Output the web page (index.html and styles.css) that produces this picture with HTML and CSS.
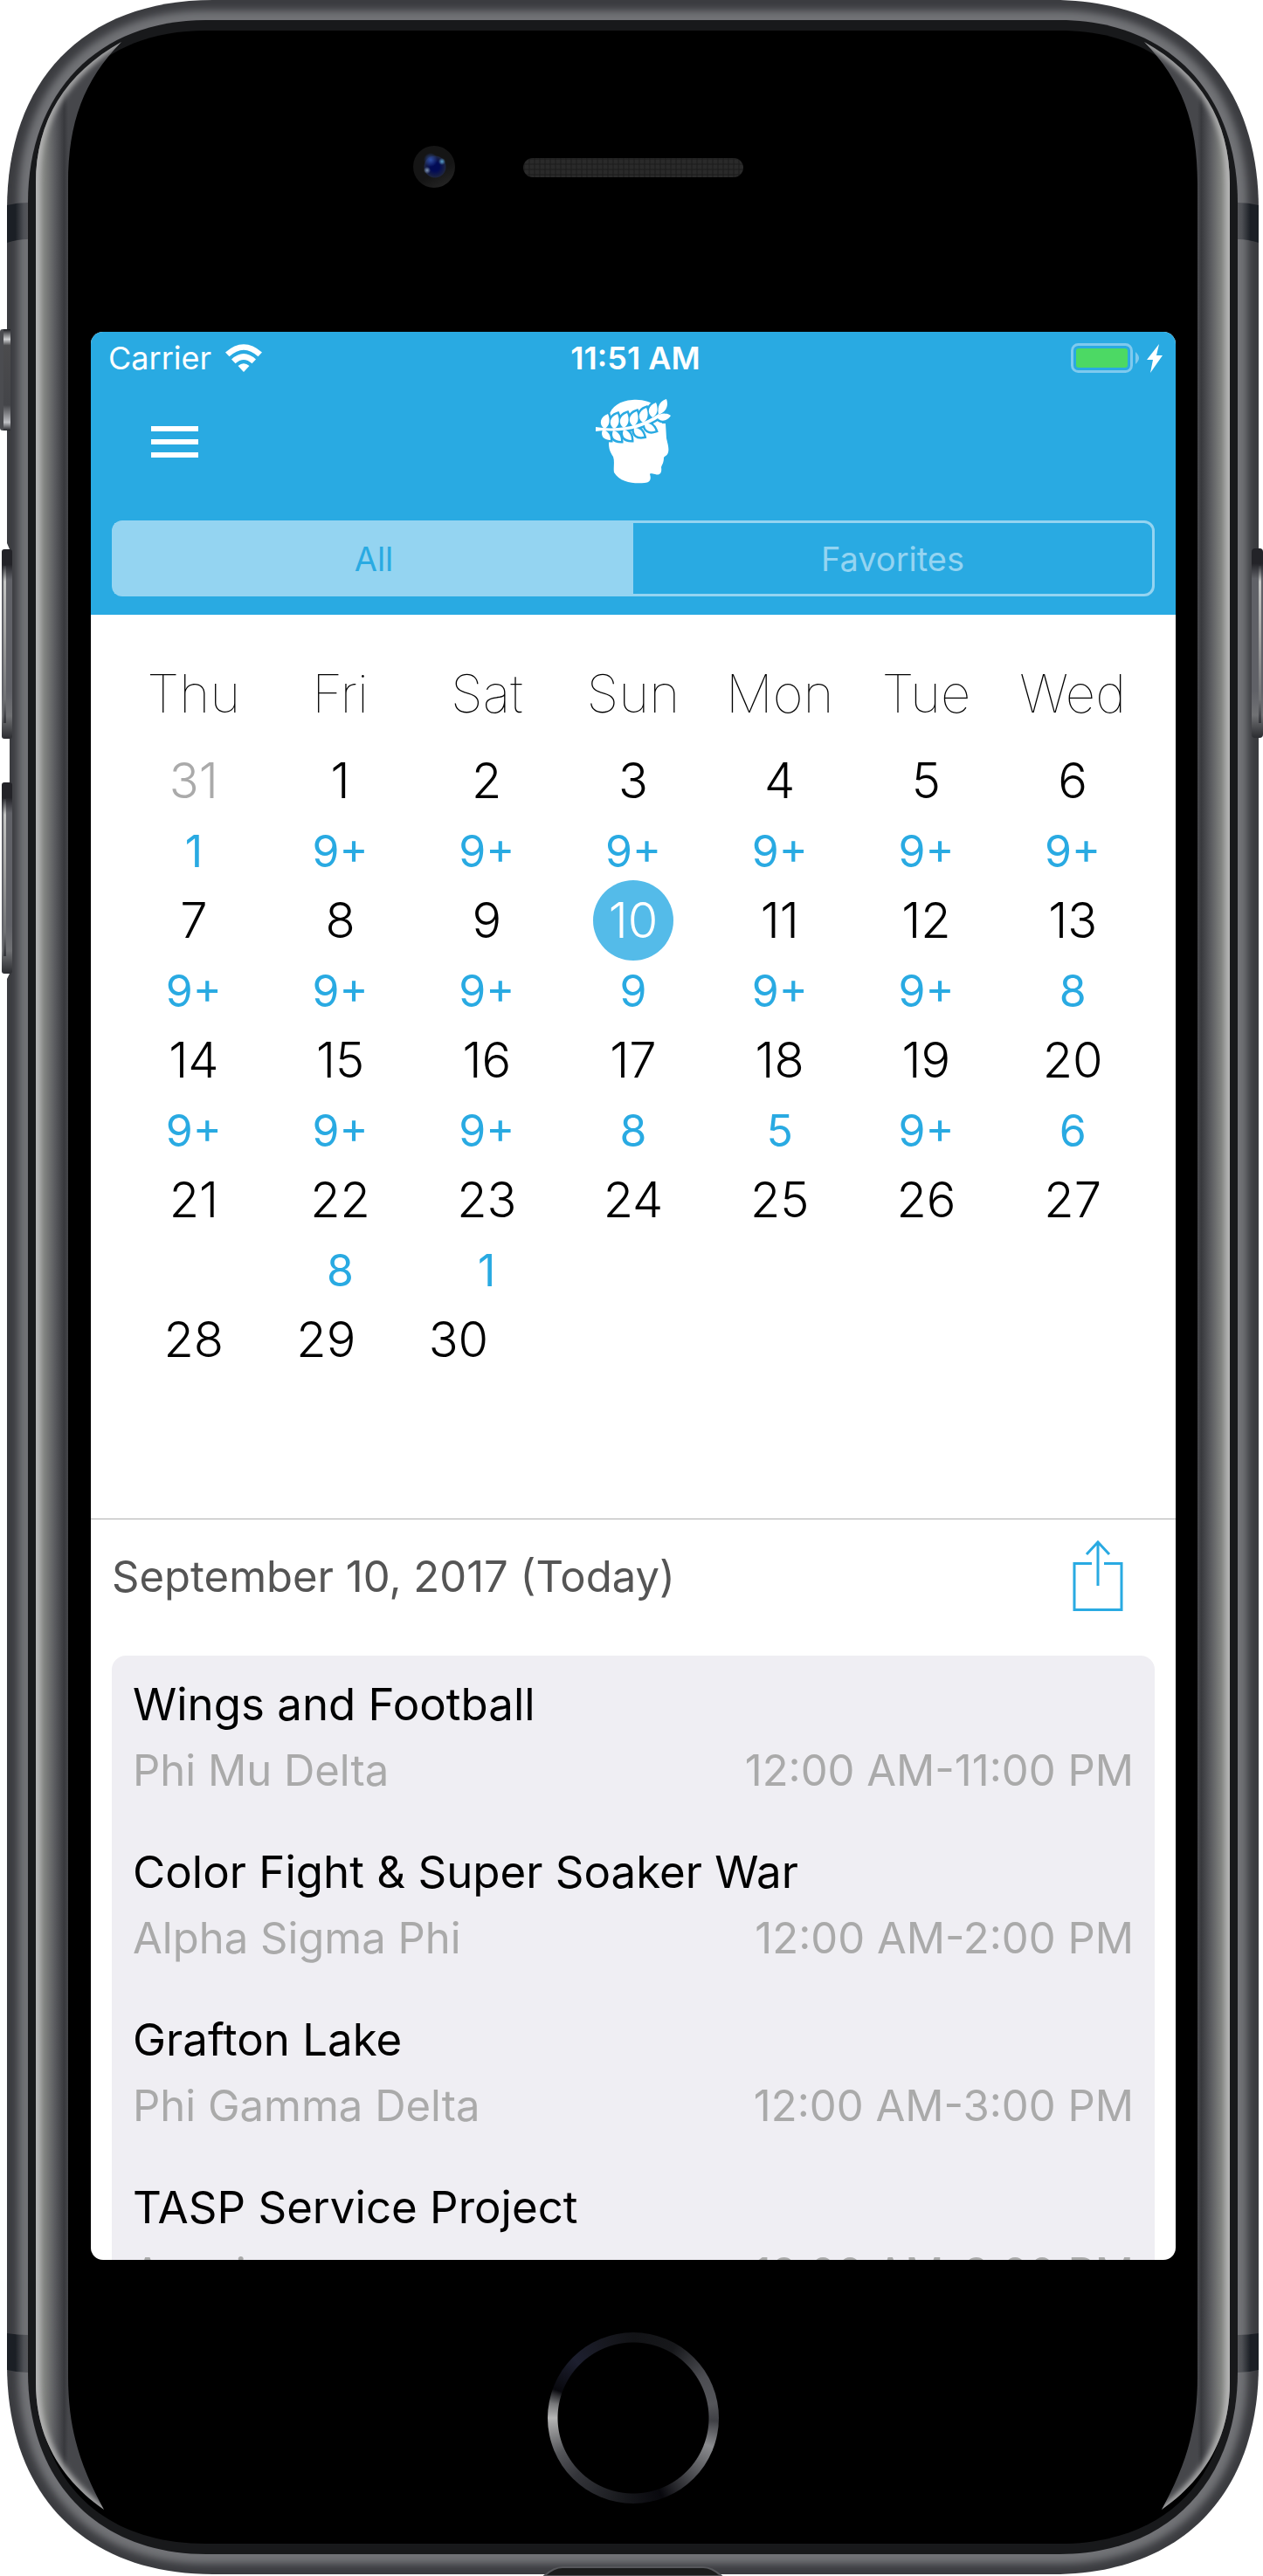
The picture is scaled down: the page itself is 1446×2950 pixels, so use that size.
FILE: index.html
```html
<!DOCTYPE html>
<html lang="en">
<head>
<meta charset="utf-8">
<meta name="viewport" content="width=device-width, initial-scale=1">
<title>Events calendar</title>
<link rel="stylesheet" href="styles.css">
</head>
<body>
<div class="device">
  <svg class="shell" viewBox="0 0 1446 2950" preserveAspectRatio="none" aria-hidden="true">
    <defs>
      <path id="body" d="M8 240C8 94 94 0 244 0H1205C1355 0 1441 94 1441 240V2708C1441 2854 1355 2948 1205 2948H244C94 2948 8 2854 8 2708Z"/>
      <path id="rim" d="M32 232C32 106 112 23 236 23H1213C1337 23 1417 106 1417 232V2716C1417 2842 1337 2925 1213 2925H236C112 2925 32 2842 32 2716Z"/>
      <path id="edge" d="M139 48C75 84 41 138 41 210V2728C41 2790 68 2838 119 2874C93 2826 78 2784 78 2722V210C78 140 96 92 139 48Z"/>
      <clipPath id="bodyClip"><use href="#body"/></clipPath>
      <clipPath id="edgeClip"><use href="#edge"/></clipPath>
      <filter id="soft" x="-5%" y="-5%" width="110%" height="110%"><feGaussianBlur stdDeviation="4"/></filter>
      <filter id="soft2" filterUnits="userSpaceOnUse" x="0" y="0" width="200" height="2950"><feGaussianBlur stdDeviation="3"/></filter>
      <linearGradient id="glass" gradientUnits="userSpaceOnUse" x1="41" x2="78" y1="0" y2="0">
        <stop offset="0" stop-color="#a9a9a9"/><stop offset=".25" stop-color="#848683"/><stop offset=".6" stop-color="#595a5e"/><stop offset=".88" stop-color="#38393d"/><stop offset="1" stop-color="#46474b"/>
      </linearGradient>
      <linearGradient id="band"><stop offset=".4" stop-color="#1b1f25"/><stop offset=".8" stop-color="#4e5055"/><stop offset="1" stop-color="#56575b"/></linearGradient>
      <linearGradient id="key" x2="0" y2="1"><stop offset=".08" stop-color="#232328"/><stop offset=".16" stop-color="#606167"/><stop offset=".75" stop-color="#606167"/><stop offset=".88" stop-color="#707174"/><stop offset="1" stop-color="#2b2c30"/></linearGradient>
      <linearGradient id="keyLight" x2="0" y2="1"><stop offset="0" stop-color="#34353a"/><stop offset=".1" stop-color="#c4c5c4"/><stop offset=".4" stop-color="#a7a7a6"/><stop offset=".85" stop-color="#707174"/><stop offset="1" stop-color="#333439"/></linearGradient>
      <linearGradient id="mute" x2="0" y2="1"><stop offset="0" stop-color="#1b1c20"/><stop offset=".1" stop-color="#d0d1d3"/><stop offset=".16" stop-color="#4b4b4d"/><stop offset=".75" stop-color="#444549"/><stop offset=".92" stop-color="#bfc0c4"/><stop offset="1" stop-color="#222327"/></linearGradient>
    </defs>
    <use href="#body" fill="#3b3c40"/>
    <g clip-path="url(#bodyClip)"><use href="#rim" fill="none" stroke="#717276" stroke-width="22" filter="url(#soft)"/></g>
    <path d="M8 235Q20 232 32 232V274Q20 274 8 278Z" fill="url(#band)"/>
    <path d="M8 2672Q20 2674 32 2674V2717Q20 2717 8 2714Z" fill="url(#band)"/>
    <g transform="matrix(-1 0 0 1 1449 0)">
      <path d="M8 235Q20 232 32 232V274Q20 274 8 278Z" fill="url(#band)"/>
      <path d="M8 2672Q20 2674 32 2674V2717Q20 2717 8 2714Z" fill="url(#band)"/>
    </g>
    <use href="#rim" fill="#18191b"/>
    <path d="M41 240C41 116 112 35 236 35H1213C1337 35 1408 116 1408 240V2716C1408 2836 1337 2913 1213 2913H236C112 2913 41 2836 41 2716Z" fill="#000"/>
    <g id="crescent">
      <use href="#edge" fill="url(#glass)"/>
      <g clip-path="url(#edgeClip)"><path d="M141 46C75 84 41 138 41 210V2728C41 2790 68 2838 121 2876" fill="none" stroke="#b8b8b8" stroke-width="7" filter="url(#soft2)"/></g>
    </g>
    <use href="#crescent" transform="matrix(-1 0 0 1 1449 0)"/>
    <path d="M8 846H11V896H8Z M8 622L11 629H8Z M8 1121L11 1115H8Z" fill="#fff"/>
    <rect x="0" y="377" width="12" height="116" rx="3" fill="#4b4c50"/>
    <rect x="4" y="377" width="8" height="116" fill="url(#mute)"/>
    <rect x="2" y="629" width="12" height="217" rx="3" fill="url(#key)"/>
    <rect x="4" y="648" width="3" height="180" fill="url(#keyLight)"/>
    <rect x="2" y="896" width="12" height="219" rx="3" fill="url(#key)"/>
    <rect x="4" y="915" width="3" height="180" fill="url(#keyLight)"/>
    <rect x="1433" y="628" width="13" height="217" rx="4" fill="url(#key)"/>
    <rect x="1441" y="648" width="3" height="180" fill="url(#keyLight)"/>
    <path d="M623 2950Q634 2940 644 2940H805Q815 2940 826 2950Z" fill="#1b1c1c" stroke="#56575b" stroke-width="2"/>
  </svg>

  <div class="bezel-top">
    <span class="camera"></span>
    <span class="speaker"></span>
  </div>

  <main class="screen">
    <header class="top">
      <div class="status">
        <div class="carrier">Carrier
          <svg width="42" height="32" viewBox="0 0 42 32" fill="#fff" aria-hidden="true">
            <path d="M21 32L14.500 25Q21 19.500 27.500 25Z"/>
            <path d="M7 17.500Q21 4.500 35 17.500L30.500 22.300Q21 13.500 11.500 22.300Z"/>
            <path d="M0 9.500Q21 -9 42 9.500L37.500 14.300Q21 -1 4.500 14.300Z"/>
          </svg>
        </div>
        <strong class="time">11:51 AM</strong>
        <div class="battery">
          <svg width="105" height="36" viewBox="0 0 105 36" aria-hidden="true">
            <rect x="1.500" y="2.500" width="68" height="31" rx="7" fill="none" stroke="#7fcaee" stroke-width="3"/>
            <rect x="6" y="7" width="59" height="22" rx="3" fill="#4cd964"/>
            <path d="M74 11Q82 18 74 25Z" fill="#7fcaee"/>
            <path d="M101 2L87 20H94L91 35L105 15H98Z" fill="#fff"/>
          </svg>
        </div>
      </div>
      <div class="nav">
        <button class="menu" type="button" aria-label="Menu"><i></i><i></i><i></i></button>
        <svg class="logo" width="86" height="98" viewBox="0 0 86 98" aria-hidden="true">
          <defs>
            <path id="up" d="M0 0C-7 -5 -5 -14 4 -17C7 -10 6 -3 0 0Z"/>
            <path id="down" d="M0 0C-3 7 1 12 9 12C9 6 6 1 0 0Z"/>
            <g id="wreath">
              <path d="M0 32L8 33C34 35 54 29 72 17L74 20C56 33 34 38 8 36L0 37Z"/>
              <use href="#up" x="10" y="34"/><use href="#up" x="21" y="34"/><use href="#up" x="32" y="33"/>
              <use href="#up" x="43" y="31"/><use href="#up" x="54" y="27"/><use href="#up" x="65" y="21"/>
              <use href="#down" x="8" y="35"/><use href="#down" x="20" y="36"/><use href="#down" x="32" y="35"/>
              <use href="#down" transform="translate(44 33) rotate(-12)"/><use href="#down" transform="translate(56 28) rotate(-20)"/>
              <path d="M72 18C70 8 74 2 81 0C84 8 80 15 72 18Z"/>
              <path d="M69 20C74 27 81 26 86 19C80 15 74 16 69 20Z"/>
            </g>
          </defs>
          <path fill="#fff" d="M15 20C18 8 28 2 42 1C53 0 63 3 69 8L76 28L80 28L81 45C83 53 84 57 83 61C82 65 79 65 78 67C78 73 76 75 75 78C76 84 74 88 68 86C64 85 62 85 62 86C64 92 62 96 56 96C44 97 28 96 21 84C20 78 22 72 20 66C16 60 15 56 15 50Z"/>
          <use href="#wreath" fill="#29aae2" stroke="#29aae2" stroke-width="5"/>
          <use href="#wreath" fill="#fff"/>
        </svg>
      </div>
      <div class="segments">
        <button type="button" class="segment on" aria-pressed="true">All</button>
        <button type="button" class="segment" aria-pressed="false">Favorites</button>
      </div>
    </header>

    <table class="calendar">
      <thead><tr><th>Thu</th><th>Fri</th><th>Sat</th><th>Sun</th><th>Mon</th><th>Tue</th><th>Wed</th></tr></thead>
      <tbody>
        <tr><td class="other"><b>31</b><span>1</span></td><td><b>1</b><span>9+</span></td><td><b>2</b><span>9+</span></td><td><b>3</b><span>9+</span></td><td><b>4</b><span>9+</span></td><td><b>5</b><span>9+</span></td><td><b>6</b><span>9+</span></td></tr>
        <tr><td><b>7</b><span>9+</span></td><td><b>8</b><span>9+</span></td><td><b>9</b><span>9+</span></td><td class="today"><b>10</b><span>9</span></td><td><b>11</b><span>9+</span></td><td><b>12</b><span>9+</span></td><td><b>13</b><span>8</span></td></tr>
        <tr><td><b>14</b><span>9+</span></td><td><b>15</b><span>9+</span></td><td><b>16</b><span>9+</span></td><td><b>17</b><span>8</span></td><td><b>18</b><span>5</span></td><td><b>19</b><span>9+</span></td><td><b>20</b><span>6</span></td></tr>
        <tr><td><b>21</b></td><td><b>22</b><span>8</span></td><td><b>23</b><span>1</span></td><td><b>24</b></td><td><b>25</b></td><td><b>26</b></td><td><b>27</b></td></tr>
        <tr class="last"><td><b>28</b></td><td><b>29</b></td><td><b>30</b></td></tr>
      </tbody>
    </table>

    <section class="agenda">
      <div class="agenda-head">
        <h1>September 10, 2017 (Today)</h1>
        <button class="share" type="button" aria-label="Share">
          <svg width="58" height="82" viewBox="0 0 58 82" fill="none" stroke="#29aae2" stroke-width="3" aria-hidden="true">
            <path d="M22 26.500H2V79.500H56V26.500H36M29 2V52M16 16L29 2L42 16"/>
          </svg>
        </button>
      </div>
      <ul class="events">
        <li><h2>Wings and Football</h2><p><span>Phi Mu Delta</span><time>12:00 AM-11:00 PM</time></p></li>
        <li><h2>Color Fight &amp; Super Soaker War</h2><p><span>Alpha Sigma Phi</span><time>12:00 AM-2:00 PM</time></p></li>
        <li><h2>Grafton Lake</h2><p><span>Phi Gamma Delta</span><time>12:00 AM-3:00 PM</time></p></li>
        <li><h2>TASP Service Project</h2><p><span>Acacia</span><time>12:00 AM-3:00 PM</time></p></li>
      </ul>
    </section>
  </main>

  <div class="bezel-bottom">
    <button class="home" type="button" aria-label="Home"></button>
  </div>
</div>
</body>
</html>
```
FILE: styles.css
```css
* { box-sizing: border-box; }
body { margin: 0; background: #fff; font-family: Inter, "Liberation Sans", sans-serif; color: #000; }
h1, h2, p, ul { margin: 0; padding: 0; font-weight: 400; }
button { border: 0; padding: 0; background: none; font: inherit; }

.device { position: relative; max-width: 1446px; margin: 0 auto; padding: 0 100px 0 104px; }
.shell { position: absolute; inset: 0; width: 100%; height: 100%; }
.bezel-top, .screen, .bezel-bottom { position: relative; }

.bezel-top { height: 380px; padding: 167px 0 0; display: grid; grid-template-columns: 1fr 252px 1fr; align-items: start; }
.camera { justify-self: end; width: 48px; height: 48px; margin-right: 78px; border-radius: 50%;
  background: radial-gradient(circle at 16px 28px, #7f97b5 0, transparent 4px), radial-gradient(circle at 33px 18px, #5aa0cc 0, transparent 4px), radial-gradient(circle at 20px 16px, #2f4fa8 0, transparent 8px), radial-gradient(circle at 25px 24px, #020b55 5px, #1d2440 12px, transparent 13px), linear-gradient(150deg, #151515 60%, #2a2a2a); }
.speaker { height: 22px; margin-top: 14px; border-radius: 11px; background-color: #2a2a2a;
  background-image: repeating-linear-gradient(90deg, #1c1c1c88 0 2px, transparent 2px 6px), repeating-linear-gradient(#1c1c1c88 0 2px, transparent 2px 6px); }
.bezel-bottom { height: 362px; display: flex; justify-content: center; align-items: center; }
.home { width: 196px; height: 196px; border-radius: 50%;
  background: radial-gradient(circle, #000 86px, transparent 87px), conic-gradient(#121316, #17181b 30deg, #4d4e53 60deg, #55565a 80deg, #3f4045 92deg, #8b8c8f 110deg, #4a4b4f 135deg, #08080d 160deg, #16171b 185deg, #34353a 225deg, #55565a 245deg, #b5b5b5 270deg, #77787a 280deg, #08080d 290deg, #1d1f2f 315deg, #17181f 340deg, #121316); }

.screen { aspect-ratio: 1242 / 2208; overflow: hidden; border-radius: 14px; background: #fff; }
.top { padding-bottom: 21px; background: #29aae2; color: #fff; }
.status { height: 60px; padding: 0 15px 0 20px; display: grid; grid-template-columns: 1fr auto 1fr; align-items: center; font-size: 36px; line-height: 60px; }
.carrier { display: flex; align-items: center; gap: 16px; }
.time { font-weight: 600; }
.battery { display: flex; justify-content: flex-end; }
.nav { height: 132px; padding: 0 69px; display: grid; grid-template-columns: 1fr auto 1fr; align-items: center; }
.menu { display: grid; gap: 9px; width: 54px; }
.menu i { height: 6px; background: #fff; }
.logo { display: block; }
.segments { margin: 24px 24px 0; height: 87px; display: grid; grid-template-columns: 1fr 1fr; border: 3px solid #94d4f1; border-radius: 12px; }
.segment { font-size: 38px; color: #94d4f1; }
.segment.on { background: #94d4f1; color: #29aae2; }

.calendar { display: block; height: 1036px; padding: 36px 34px 0; border-bottom: 1px solid #b0b0b0; }
.calendar thead, .calendar tbody { display: block; }
.calendar tr { display: grid; grid-template-columns: repeat(7, 1fr); }
.calendar .last { grid-template-columns: repeat(7, 13%); padding-left: 8px; }
.calendar th { padding: 0; font-size: 60px; line-height: 108px; font-weight: 100; text-align: center; }
.calendar td { height: 160px; padding: 0; text-align: center; }
.calendar b { display: block; width: 92px; margin: 0 auto; font-size: 56px; line-height: 92px; font-weight: 300; }
.calendar span { display: block; font-size: 50px; line-height: 70px; color: #29aae2; }
.other b { color: #aaa; }
.today b { border-radius: 50%; background: #54bbe9; color: #fff; }

.agenda { padding: 0 24px; }
.agenda-head { height: 130px; padding-right: 36px; display: flex; align-items: center; justify-content: space-between; }
.agenda-head h1 { font-size: 49px; color: #555; }
.share svg { display: block; }
.events { margin-top: 26px; padding: 18px 24px; display: grid; gap: 40px; list-style: none; border-radius: 16px; background: #efeef3; }
.events h2 { font-size: 51px; line-height: 76px; }
.events p { display: flex; justify-content: space-between; font-size: 49px; line-height: 76px; color: #aaa; }
```
